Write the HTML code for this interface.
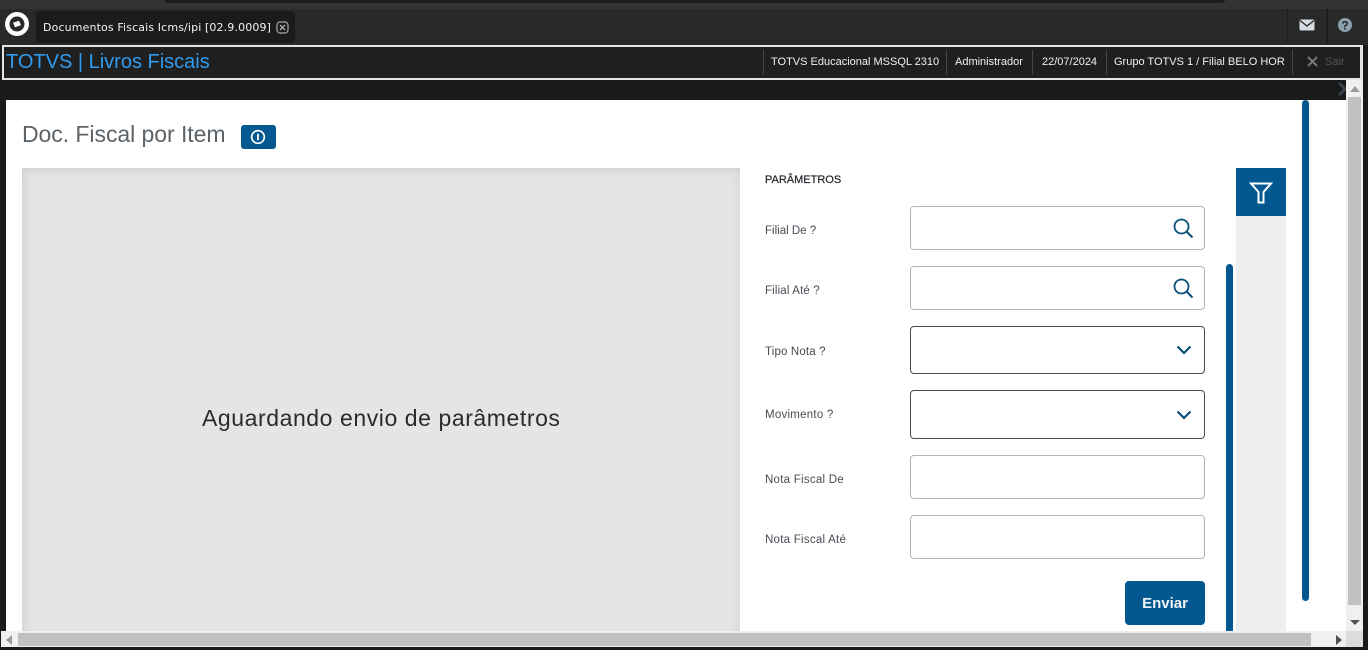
<!DOCTYPE html>
<html lang="pt"><head><meta charset="utf-8"><title>Documentos Fiscais</title>
<style>
*{box-sizing:border-box}
html,body{margin:0;padding:0;width:1368px;height:650px;overflow:hidden;background:#1a1a1a;font-family:"Liberation Sans",Arial,sans-serif}
.a{position:absolute}
.t{position:absolute;white-space:nowrap}
.inp{position:absolute;left:910px;width:295px;background:#fff;border:1px solid #b4b4b4;border-radius:4px}
.sel{border-color:#4a4a4a}
.lbl{position:absolute;left:765px;font-size:11.5px;letter-spacing:.25px;color:#4a4a55;white-space:nowrap;line-height:14px}
.sep{position:absolute;top:50px;height:25px;width:1px;background:#444}
.hd{position:absolute;top:54px;font-size:11px;color:#f0f0f0;line-height:16px;white-space:nowrap}
</style></head><body>
<div class="a" style="left:0;top:0;width:1368px;height:9px;background:#333"></div>
<div class="a" style="left:165px;top:0;width:1060px;height:3px;background:#1d1d1d;border-radius:0 0 6px 6px"></div>
<div class="a" style="left:0;top:9px;width:1368px;height:36px;background:#292929"></div>
<svg class="a" style="left:5px;top:12px" width="24" height="24" viewBox="0 0 24 24"><circle cx="12" cy="12" r="12" fill="#fff"/><circle cx="12" cy="12" r="7.5" fill="#292929"/><path d="M8 10.7L14 8.7L16 13.3L10 15.3Z" fill="#fff"/></svg>
<div class="a" style="left:36px;top:11px;width:259px;height:32px;background:#1b1b1b;border-radius:4px 4px 0 0"></div>
<div class="t" style="left:43px;top:20px;font-family:'DejaVu Sans',sans-serif;font-size:11px;letter-spacing:.13px;line-height:16px;color:#f4f4f4">Documentos Fiscais Icms/ipi [02.9.0009]</div>
<svg class="a" style="left:276px;top:21px" width="13" height="13" viewBox="0 0 13 13"><rect x="1" y="1" width="11" height="11" rx="3" fill="none" stroke="#aaa" stroke-width="1.2"/><path d="M4 4L9 9M9 4L4 9" stroke="#aaa" stroke-width="1.4"/></svg>
<div class="a" style="left:1287px;top:9px;width:1px;height:34px;background:#1c1c1c"></div>
<div class="a" style="left:1326px;top:9px;width:2px;height:34px;background:#1c1c1c"></div>
<svg class="a" style="left:1299px;top:19px" width="16" height="12" viewBox="0 0 16 12"><rect x="0.5" y="0.5" width="15" height="11" rx="1.5" fill="#d5dce2"/><path d="M1 1.5L8 7L15 1.5" fill="none" stroke="#292929" stroke-width="1.4"/></svg>
<svg class="a" style="left:1337px;top:17px" width="16" height="16" viewBox="0 0 16 16"><circle cx="8" cy="8" r="7" fill="#8ba1b0"/><text x="8" y="12.3" font-size="12" font-weight="bold" text-anchor="middle" fill="#222" font-family="Liberation Sans">?</text></svg>

<div class="a" style="left:2px;top:45px;width:1361px;height:35px;background:#1f1f1f;border:3px solid #e4e4e4;border-width:2px 3px 2px 2px"></div>
<div class="t" style="left:6px;top:50px;font-size:20px;line-height:24px;color:#2f9bef">TOTVS | Livros Fiscais</div>
<div class="sep" style="left:763px"></div><div class="sep" style="left:946px"></div><div class="sep" style="left:1032px"></div><div class="sep" style="left:1106px"></div><div class="sep" style="left:1292px"></div>
<div class="hd" style="left:771px">TOTVS Educacional MSSQL 2310</div>
<div class="hd" style="left:955px">Administrador</div>
<div class="hd" style="left:1042px">22/07/2024</div>
<div class="hd" style="left:1114px">Grupo TOTVS 1 / Filial BELO HOR</div>
<svg class="a" style="left:1307px;top:56px" width="11" height="11" viewBox="0 0 11 11"><path d="M1 1L10 10M10 1L1 10" stroke="#777" stroke-width="2"/></svg>
<div class="hd" style="left:1325px;color:#555">Sair</div>

<svg class="a" style="left:1338px;top:82px" width="10" height="14" viewBox="0 0 10 14"><path d="M1 1L7 7L1 13" fill="none" stroke="#3c4654" stroke-width="2.5"/></svg>

<div class="a" style="left:6px;top:100px;width:1341px;height:531px;background:#fff"></div>
<div class="t" style="left:22px;top:120px;font-size:23px;letter-spacing:-.05px;line-height:28px;color:#5c6368">Doc. Fiscal por Item</div>
<div class="a" style="left:241px;top:125px;width:35px;height:24px;background:#03598f;border-radius:3px"></div>
<svg class="a" style="left:250px;top:129px" width="16" height="16" viewBox="0 0 16 16"><circle cx="8" cy="8" r="6.3" fill="none" stroke="#fff" stroke-width="1.7"/><path d="M8 4.8V11.2" stroke="#fff" stroke-width="1.8"/></svg>

<div class="a" style="left:22px;top:168px;width:718px;height:463px;background:#e5e5e5;box-shadow:inset 0 8px 10px -6px #cfcfcf,inset 8px 0 10px -6px #cfcfcf,inset -8px 0 10px -6px #d8d8d8"></div>
<div class="t" style="left:202px;top:404px;font-size:23px;letter-spacing:.57px;line-height:28px;color:#2b2b2b">Aguardando envio de parâmetros</div>

<div class="t" style="left:765px;top:173px;font-size:11px;line-height:14px;color:#22242a;-webkit-text-stroke:.2px #22242a">PARÂMETROS</div>
<div class="lbl" style="top:224px;letter-spacing:0">Filial De ?</div>
<div class="lbl" style="top:284px;letter-spacing:.15px">Filial Até ?</div>
<div class="lbl" style="top:345px;letter-spacing:.15px">Tipo Nota ?</div>
<div class="lbl" style="top:408px">Movimento ?</div>
<div class="lbl" style="top:473px">Nota Fiscal De</div>
<div class="lbl" style="top:533px">Nota Fiscal Até</div>

<div class="inp" style="top:206px;height:44px"></div>
<div class="inp" style="top:266px;height:44px"></div>
<div class="inp sel" style="top:326px;height:48px"></div>
<div class="inp sel" style="top:390px;height:49px"></div>
<div class="inp" style="top:455px;height:44px"></div>
<div class="inp" style="top:515px;height:44px"></div>

<svg class="a" style="left:1172px;top:217px" width="22" height="22" viewBox="0 0 22 22"><circle cx="9.5" cy="9.5" r="7" fill="none" stroke="#0b4f7a" stroke-width="1.8"/><path d="M14.5 14.5L20.5 20.5" stroke="#0b4f7a" stroke-width="2"/></svg>
<svg class="a" style="left:1172px;top:277px" width="22" height="22" viewBox="0 0 22 22"><circle cx="9.5" cy="9.5" r="7" fill="none" stroke="#0b4f7a" stroke-width="1.8"/><path d="M14.5 14.5L20.5 20.5" stroke="#0b4f7a" stroke-width="2"/></svg>
<svg class="a" style="left:1176px;top:344px" width="16" height="12" viewBox="0 0 16 12"><path d="M1.5 2.5L8 9L14.5 2.5" fill="none" stroke="#0b4f7a" stroke-width="2.2"/></svg>
<svg class="a" style="left:1176px;top:409px" width="16" height="12" viewBox="0 0 16 12"><path d="M1.5 2.5L8 9L14.5 2.5" fill="none" stroke="#0b4f7a" stroke-width="2.2"/></svg>

<div class="a" style="left:1125px;top:581px;width:80px;height:44px;background:#03598f;border-radius:4px"></div>
<div class="t" style="left:1125px;top:595px;width:80px;text-align:center;font-size:15px;font-weight:bold;line-height:18px;color:#f2f6f9">Enviar</div>

<div class="a" style="left:1226px;top:264px;width:7px;height:367px;background:#03598f;border-radius:4px 4px 0 0"></div>
<div class="a" style="left:1236px;top:168px;width:50px;height:463px;background:#eee"></div>
<div class="a" style="left:1236px;top:168px;width:50px;height:48px;background:#03598f"></div>
<svg class="a" style="left:1249px;top:182px" width="24" height="22" viewBox="0 0 24 22"><path d="M2 1.5H22L14.5 10V20.5H9.5V10Z" fill="none" stroke="#fff" stroke-width="2"/><path d="M7 5.5H17L12.5 10H11.5Z" fill="#03598f"/></svg>
<div class="a" style="left:1302px;top:100px;width:7px;height:501px;background:#03598f;border-radius:4px"></div>

<div class="a" style="left:1346px;top:80px;width:17px;height:551px;background:#f0f0f0"></div>
<div class="a" style="left:1348px;top:97px;width:13px;height:508px;background:#c1c1c1"></div>
<svg class="a" style="left:1350px;top:86px" width="10" height="6" viewBox="0 0 10 6"><path d="M5 0L10 6H0Z" fill="#9a9a9a"/></svg>
<svg class="a" style="left:1350px;top:620px" width="10" height="5" viewBox="0 0 10 5"><path d="M0 0H10L5 5Z" fill="#505050"/></svg>

<div class="a" style="left:1px;top:631px;width:1345px;height:16px;background:#f0f0f0"></div>
<div class="a" style="left:18px;top:633px;width:1293px;height:13px;background:#c1c1c1"></div>
<div class="a" style="left:1346px;top:631px;width:17px;height:16px;background:#dcdcdc"></div>
<svg class="a" style="left:6px;top:635px" width="6" height="10" viewBox="0 0 6 10"><path d="M6 0V10L0 5Z" fill="#9a9a9a"/></svg>
<svg class="a" style="left:1336px;top:635px" width="6" height="10" viewBox="0 0 6 10"><path d="M0 0V10L6 5Z" fill="#505050"/></svg>
</body></html>
